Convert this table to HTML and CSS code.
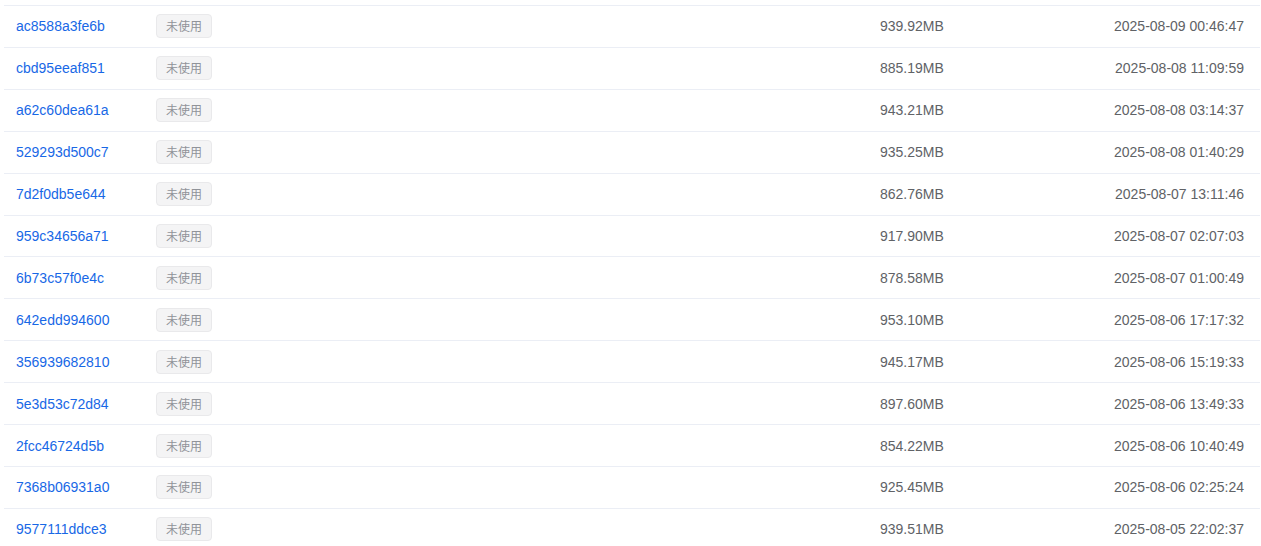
FILE: index.html
```html
<!DOCTYPE html>
<html lang="zh">
<head>
<meta charset="utf-8">
<link rel="stylesheet" href="styles.css">
</head>
<body>
<div class="table">
  <div class="row"><a class="id">ac8588a3fe6b</a><div class="tagcell"><span class="tag">未使用</span></div><div class="size">939.92MB</div><div class="date">2025-08-09 00:46:47</div></div>
  <div class="row"><a class="id">cbd95eeaf851</a><div class="tagcell"><span class="tag">未使用</span></div><div class="size">885.19MB</div><div class="date">2025-08-08 11:09:59</div></div>
  <div class="row"><a class="id">a62c60dea61a</a><div class="tagcell"><span class="tag">未使用</span></div><div class="size">943.21MB</div><div class="date">2025-08-08 03:14:37</div></div>
  <div class="row"><a class="id">529293d500c7</a><div class="tagcell"><span class="tag">未使用</span></div><div class="size">935.25MB</div><div class="date">2025-08-08 01:40:29</div></div>
  <div class="row"><a class="id">7d2f0db5e644</a><div class="tagcell"><span class="tag">未使用</span></div><div class="size">862.76MB</div><div class="date">2025-08-07 13:11:46</div></div>
  <div class="row"><a class="id">959c34656a71</a><div class="tagcell"><span class="tag">未使用</span></div><div class="size">917.90MB</div><div class="date">2025-08-07 02:07:03</div></div>
  <div class="row"><a class="id">6b73c57f0e4c</a><div class="tagcell"><span class="tag">未使用</span></div><div class="size">878.58MB</div><div class="date">2025-08-07 01:00:49</div></div>
  <div class="row"><a class="id">642edd994600</a><div class="tagcell"><span class="tag">未使用</span></div><div class="size">953.10MB</div><div class="date">2025-08-06 17:17:32</div></div>
  <div class="row"><a class="id">356939682810</a><div class="tagcell"><span class="tag">未使用</span></div><div class="size">945.17MB</div><div class="date">2025-08-06 15:19:33</div></div>
  <div class="row"><a class="id">5e3d53c72d84</a><div class="tagcell"><span class="tag">未使用</span></div><div class="size">897.60MB</div><div class="date">2025-08-06 13:49:33</div></div>
  <div class="row"><a class="id">2fcc46724d5b</a><div class="tagcell"><span class="tag">未使用</span></div><div class="size">854.22MB</div><div class="date">2025-08-06 10:40:49</div></div>
  <div class="row"><a class="id">7368b06931a0</a><div class="tagcell"><span class="tag">未使用</span></div><div class="size">925.45MB</div><div class="date">2025-08-06 02:25:24</div></div>
  <div class="row"><a class="id">9577111ddce3</a><div class="tagcell"><span class="tag">未使用</span></div><div class="size">939.51MB</div><div class="date">2025-08-05 22:02:37</div></div>
</div>
</body>
</html>
```
FILE: styles.css
```css
html, body {
  margin: 0;
  padding: 0;
  background: #ffffff;
}
body {
  font-family: "Liberation Sans", Arial, "Noto Sans CJK SC", sans-serif;
  font-size: 14px;
  color: #606266;
  overflow: hidden;
}
.table {
  margin: 5px 1px 0 4px;
  border-top: 1px solid #ebeef5;
}
.row {
  display: grid;
  grid-template-columns: 140px 1fr 192px 200px;
  align-items: center;
  height: 41.92px;
  box-sizing: border-box;
  border-bottom: 1px solid #ebeef5;
}
.id {
  padding-left: 12px;
  color: #1868e6;
  text-decoration: none;
  white-space: nowrap;
}
.tagcell {
  padding-left: 12px;
  display: flex;
}
.tag {
  display: inline-block;
  height: 24px;
  line-height: 22px;
  padding: 0 9px;
  box-sizing: border-box;
  font-size: 12px;
  font-family: "Noto Sans CJK SC", sans-serif;
  color: #909399;
  background: #f4f4f5;
  border: 1px solid #e9e9eb;
  border-radius: 4px;
}
.size {
  padding-left: 12px;
}
.date {
  text-align: right;
  padding-right: 16px;
}
```
